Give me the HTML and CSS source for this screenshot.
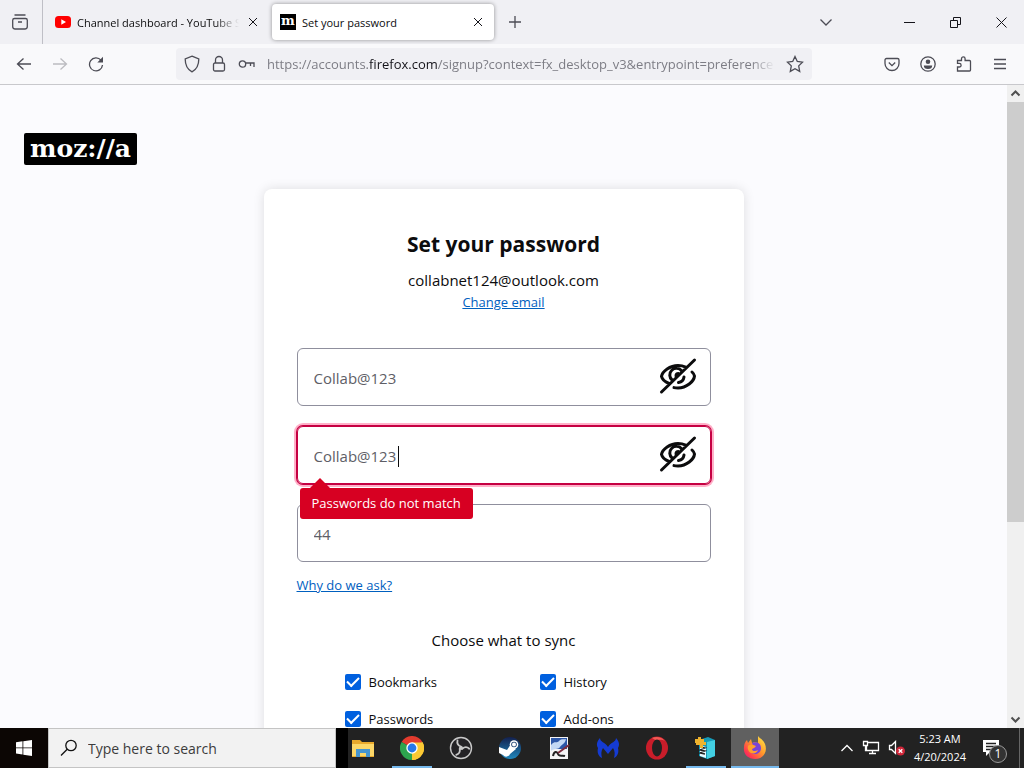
FILE: index.html
```
<!DOCTYPE html>
<html lang="en">
<head>
  <meta charset="UTF-8">
  <meta name="viewport" content="width=device-width, initial-scale=1">
  <title>Set your password</title>
  <link rel="stylesheet" href="styles.css">
</head>
<body>
  <!-- Tabs -->
  <div class="tab-bar">
    <button class="view" aria-label="Recent browsing">
      <svg width="18" height="18" viewBox="0 0 18 18"><path d="M3.500 2h11M3.500 5.500h11a1.800 1.800 0 0 1 1.800 1.800v6.200a2.500 2.500 0 0 1-2.500 2.500H4.200a2.500 2.500 0 0 1-2.500-2.500V7.300a1.800 1.800 0 0 1 1.800-1.800zM7 9h4"/></svg>
    </button>
    <div class="tabs">
      <div class="tab">
        <svg class="favicon" width="16" height="16" viewBox="0 0 16 16"><rect y="2" width="16" height="12" rx="3.500" fill="#f00"/><path d="M6.300 5.300v5.400L11 8z" fill="#fff"/></svg>
        <span class="tab-title fade">Channel dashboard - YouTube S</span>
        <button aria-label="Close tab"><svg width="10" height="10" viewBox="0 0 10 10"><path d="M1 1l8 8M9 1L1 9"/></svg></button>
      </div>
      <div class="tab active">
        <span class="favicon moz-icon">m</span>
        <span class="tab-title">Set your password</span>
        <button aria-label="Close tab"><svg width="10" height="10" viewBox="0 0 10 10"><path d="M1 1l8 8M9 1L1 9"/></svg></button>
      </div>
      <button class="new-tab" aria-label="New tab"><svg width="12" height="12" viewBox="0 0 12 12"><path d="M6 0v12M0 6h12"/></svg></button>
    </div>
    <button class="all-tabs" aria-label="List all tabs"><svg width="14" height="14" viewBox="0 0 14 14"><path d="M1.500 4.500L7 10l5.500-5.500"/></svg></button>
    <div class="window-buttons">
      <button aria-label="Minimize"><svg width="11" height="11" viewBox="0 0 11 11"><path d="M0 5.500h11"/></svg></button>
      <button aria-label="Restore"><svg width="11" height="11" viewBox="0 0 11 11"><path d="M.5 3.500h7v7h-7zM3.500 3.500v-3h7v7h-3"/></svg></button>
      <button aria-label="Close"><svg width="11" height="11" viewBox="0 0 11 11"><path d="M.5.5l10 10M10.500.5l-10 10"/></svg></button>
    </div>
  </div>

  <!-- Navigation -->
  <div class="nav-bar">
    <div class="nav-buttons">
      <button aria-label="Back"><svg width="16" height="16" viewBox="0 0 16 16"><path d="M15 8H1.500M7.500 2.500L1.500 8l6 5.500"/></svg></button>
      <button class="off" aria-label="Forward" disabled><svg width="16" height="16" viewBox="0 0 16 16"><path d="M1 8h13.500M8.500 2.500l6 5.500-6 5.500"/></svg></button>
      <button aria-label="Reload"><svg width="16" height="16" viewBox="0 0 16 16"><path d="M13 4.200A6.500 6.500 0 1 0 14.500 9"/><path d="M15 .8v5.700H9.300z" class="solid"/></svg></button>
    </div>
    <div class="url-bar">
      <svg width="16" height="18" viewBox="0 0 16 18"><path d="M8 1.200l6.800 2.800c0 6-2.300 10.500-6.800 12.800C3.500 14.500 1.200 10 1.200 4z"/></svg>
      <svg width="16" height="18" viewBox="0 0 16 18"><rect x="2.500" y="8" width="11" height="8" rx="1.500"/><path d="M4.500 8V5a3.500 3.500 0 0 1 7 0v3"/></svg>
      <svg width="18" height="18" viewBox="0 0 18 18"><circle cx="4.500" cy="9" r="3.200"/><path d="M7.700 8H16v4M12.500 8v3"/></svg>
      <p class="url fade">https://accounts.<b>firefox.com</b>/signup?context=fx_desktop_v3&amp;entrypoint=preference</p>
      <button aria-label="Bookmark this page"><svg width="18" height="18" viewBox="0 0 18 18"><path d="M9 1.500l2.300 5 5.200.7-3.800 3.700 1 5.500L9 13.700l-4.700 2.700 1-5.500L1.500 7.200l5.200-.7z"/></svg></button>
    </div>
    <div class="nav-buttons">
      <button aria-label="Pocket"><svg width="16" height="16" viewBox="0 0 16 16"><path d="M2.500 2.500h11a1.500 1.500 0 0 1 1.500 1.500v3.500a7 7 0 0 1-14 0V4a1.500 1.500 0 0 1 1.500-1.500zM4.800 6.500L8 9.600l3.200-3.100"/></svg></button>
      <button aria-label="Account"><svg width="16" height="16" viewBox="0 0 16 16"><circle cx="8" cy="8" r="7.200"/><circle cx="8" cy="5.700" r="2.300" class="solid"/><path d="M3.800 9.500h8.400a4.200 3.500 0 0 1-8.400 0z" class="solid"/></svg></button>
      <button aria-label="Extensions"><svg width="16" height="16" viewBox="0 0 16 16"><path d="M1.500 15v-4h1.800a1.800 1.800 0 0 0 0-3.600H1.500V4.500h4V2.700a1.800 1.800 0 0 1 3.600 0v1.800h4.400a1 1 0 0 1 1 1V14a1 1 0 0 1-1 1z"/></svg></button>
      <button aria-label="Menu"><svg width="14" height="14" viewBox="0 0 14 14"><path d="M1 2.500h12M1 7h12M1 11.500h12"/></svg></button>
    </div>
  </div>

  <!-- Page -->
  <div class="viewport">
    <div class="page">
      <header><a class="logo" href="#">moz://a</a></header>
      <main class="card">
        <h1>Set your password</h1>
        <p class="email">collabnet124@outlook.com</p>
        <a class="change" href="#">Change email</a>
        <form>
          <div class="field">
            <input type="text" aria-label="Password" value="Collab@123">
            <button type="button" aria-label="Hide password"><svg width="40" height="40" viewBox="0 0 40 40"><path d="M11 27.500C7 25.800 4 22.500 3.500 20.300 4.500 15 12 9.500 20 9.500c3 0 5.500.6 7.700 1.600M34 16c1.300 1.200 2.300 2.700 2.500 4C36 25.500 28.500 32 20 32c-1.500 0-2.800-.1-4-.4M14.300 24.300a6.700 6.700 0 1 1 9.500-9.300M26 21a6.500 6.500 0 0 1-5.500 5.500M18 20a2.500 2.500 0 0 1 2.500-2.500M3.500 36L36.500 4"/></svg></button>
          </div>
          <div class="field error">
            <input type="text" aria-label="Repeat password" value="Collab@123">
            <span class="caret"></span>
            <button type="button" aria-label="Hide password"><svg width="40" height="40" viewBox="0 0 40 40"><path d="M11 27.500C7 25.800 4 22.500 3.500 20.300 4.500 15 12 9.500 20 9.500c3 0 5.500.6 7.700 1.600M34 16c1.300 1.200 2.300 2.700 2.500 4C36 25.500 28.500 32 20 32c-1.500 0-2.800-.1-4-.4M14.300 24.300a6.700 6.700 0 1 1 9.500-9.300M26 21a6.500 6.500 0 0 1-5.500 5.500M18 20a2.500 2.500 0 0 1 2.500-2.500M3.500 36L36.500 4"/></svg></button>
            <span class="tooltip">Passwords do not match</span>
          </div>
          <div class="field">
            <input type="text" aria-label="How old are you?" value="44">
          </div>
          <a class="why" href="#">Why do we ask?</a>
          <h2>Choose what to sync</h2>
          <div class="sync">
            <label><input type="checkbox" checked>Bookmarks</label>
            <label><input type="checkbox" checked>History</label>
            <label><input type="checkbox" checked>Passwords</label>
            <label><input type="checkbox" checked>Add-ons</label>
          </div>
        </form>
      </main>
    </div>
    <div class="scrollbar">
      <svg width="17" height="17" viewBox="0 0 17 17"><path d="M4.500 10.500l4-4 4 4"/></svg>
      <div class="track"><div class="thumb"></div></div>
      <svg width="17" height="17" viewBox="0 0 17 17"><path d="M4.500 6.500l4 4 4-4"/></svg>
    </div>
  </div>

  <!-- Taskbar -->
  <footer class="taskbar">
    <button class="start" aria-label="Start"><svg width="16" height="16" viewBox="0 0 16 16"><path d="M0 2.200L6.500 1.300v6.200H0zM7.300 1.200L16 0v7.500H7.300zM0 8.300h6.500v6.200L0 13.600zM7.300 8.300H16V16l-8.700-1.200z" fill="#fff" stroke="none"/></svg></button>
    <label class="search">
      <svg width="18" height="18" viewBox="0 0 18 18"><circle cx="11" cy="6.500" r="5.200"/><path d="M7.200 10.300L1 16.500"/></svg>
      <input type="text" placeholder="Type here to search" aria-label="Search">
    </label>
    <div class="apps">
      <button aria-label="File Explorer"><svg width="24" height="24" viewBox="0 0 24 24"><path d="M1 4h8l2 2h12v15H1z" fill="#e8a92c"/><path d="M1 8h22v12H1z" fill="#fcd768"/><path d="M5 13h14v8h-4v-4H9v4H5z" fill="#4695cf"/></svg></button>
      <button class="open" aria-label="Chrome"><svg width="24" height="24" viewBox="0 0 24 24"><path d="M12 12L1.600 6A12 12 0 0 1 22.400 6z" fill="#e33b2e"/><path d="M12 12l10.400-6A12 12 0 0 1 12 24z" fill="#fcc934"/><path d="M12 12v12A12 12 0 0 1 1.600 6z" fill="#2da44e"/><path d="M12 6.500h10.700A12 12 0 0 1 12 24l4.800-9z" fill="#fcc934"/><circle cx="12" cy="12" r="5.700" fill="#fff"/><circle cx="12" cy="12" r="4.400" fill="#2878e8"/></svg></button>
      <button aria-label="OBS"><svg width="24" height="24" viewBox="0 0 24 24"><circle cx="12" cy="12" r="10.500" fill="#242326" stroke="#c9c9c9" stroke-width="1.400"/><g fill="none" stroke="#c9c9c9" stroke-width="1.800" stroke-linecap="round"><path id="blade" d="M8.500 4.500C7.800 7.500 9 9.500 12 10.500"/><use href="#blade" transform="rotate(120 12 12)"/><use href="#blade" transform="rotate(240 12 12)"/></g><circle cx="12" cy="12" r="2" fill="#c9c9c9"/></svg></button>
      <button aria-label="Steam"><svg width="24" height="24" viewBox="0 0 24 24"><defs><linearGradient id="steam" x2="0" y2="1"><stop stop-color="#14204e"/><stop offset="1" stop-color="#1f87bd"/></linearGradient></defs><circle cx="12" cy="12" r="11" fill="url(#steam)"/><path d="M1 11l8 3 4-6 5 5-6 5a4 4 0 0 1-7 1l-4-2z" fill="#fff"/><circle cx="16" cy="8.500" r="4.300" fill="#fff"/><circle cx="16" cy="8.500" r="2.800" fill="#234574"/><circle cx="16" cy="8.500" r="2" fill="#fff"/></svg></button>
      <button aria-label="Paint tool"><svg width="24" height="24" viewBox="0 0 24 24"><path d="M3 1h18v22H3z" fill="#f4f4f6"/><path d="M4 2h16v11H4z" fill="#2d57a8"/><path d="M4 9c4-5 5-1 8-4s5-1 7-2c-1 5-4 5-6 8s-6 1-9 4z" fill="#c3d8f5"/><path d="M6 20c1-5 4-5 5-2s4 1 7 2" fill="none" stroke="#222" stroke-width="2"/><path d="M11 17l11-8" stroke="#7d2c3e" stroke-width="2"/></svg></button>
      <button aria-label="Malwarebytes"><svg width="24" height="24" viewBox="0 0 24 24"><path d="M4 2c0 4 5 4 8 9 3-5 8-5 8-9 3 3 4 7 2 10 1 4 0 8-4 10 1-4 1-7-1-10l-5 6-5-6c-2 3-2 6-1 10-4-2-5-6-4-10C0 9 1 5 4 2z" fill="#153bd2"/></svg></button>
      <button aria-label="Opera"><svg width="24" height="24" viewBox="0 0 24 24"><ellipse cx="12" cy="12" rx="11" ry="11.500" fill="#c91d2a"/><path d="M7 2a11 11 0 0 1 13 3c-2-1-6-2-8 0z" fill="#f15a55"/><ellipse cx="12" cy="12" rx="5" ry="8.500" fill="#222"/></svg></button>
      <button class="open" aria-label="Archive"><svg width="24" height="24" viewBox="0 0 24 24"><path d="M5 4l9-3 7 3v16l-8 3-8-3z" fill="#169bb8"/><path d="M13 6l8-2v16l-8 3z" fill="#43d0e3"/><path d="M6 9l6 2v11l-6-2z" fill="#e8faff"/><path d="M6 11l5 1-5 2 5 1-5 2 5 1" fill="none" stroke="#222"/><path d="M1 3h3V1h3v2h3v3h2v3H9v3H6V9H2V7H1z" fill="#eeb32e"/></svg></button>
      <button class="open current" aria-label="Firefox"><svg width="24" height="24" viewBox="0 0 24 24"><defs><linearGradient id="fox" x1="1" x2="0" y2="1"><stop stop-color="#fff04a"/><stop offset=".45" stop-color="#ff982b"/><stop offset=".8" stop-color="#ff3552"/><stop offset="1" stop-color="#e31587"/></linearGradient></defs><path d="M15 0c1 2 5 3 7 8 3 8-2 15-10 15C5 23 0 18 1 11c0-3 1-5 3-7l1 3 3-4 1 4c2-1 4-1 6 0z" fill="url(#fox)"/><path d="M9 7c4-2 9 0 9 5 0 4-3 6-6 6s-5-2-5-5l4-1z" fill="#7944d8"/><path d="M5 10c2-2 5-1 8 0-1 2-3 2-4 3 0 2 3 3 6 1-1 3-4 4-7 3-2-1-4-4-3-7z" fill="#ffa02d"/></svg></button>
    </div>
    <div class="tray">
      <svg width="14" height="14" viewBox="0 0 14 14"><path d="M1.500 10L7 4.500l5.500 5.500"/></svg>
      <svg width="18" height="16" viewBox="0 0 18 16"><path d="M6 2.500h10.500v8H4.500V6M10.500 10.500v3M7 13.500h7M1.500 1.500h4v4h-4zM3.500 5.500v5h2"/></svg>
      <svg width="18" height="16" viewBox="0 0 18 16"><path d="M1.500 5.500h2l4-4v12l-4-4h-2z"/><circle cx="12.500" cy="11" r="4.500" fill="#cf2639" stroke="none"/><path d="M10.700 9.200l3.600 3.600M14.300 9.200l-3.600 3.600"/></svg>
      <p class="clock">5:23 AM<br>4/20/2024</p>
      <button aria-label="1 new notification"><svg width="18" height="18" viewBox="0 0 18 18"><path d="M1 1h16v12H8l-4 4v-4H1z" fill="#fff" stroke="none"/><path d="M4 4.500h10M4 7.500h10M4 10.500h6" stroke="#222"/></svg><span class="badge">1</span></button>
    </div>
  </footer>
</body>
</html>
```
FILE: styles.css
```
* {
  box-sizing: border-box;
}
body {
  margin: 0;
  height: 100vh;
  display: flex;
  flex-direction: column;
  overflow: hidden;
  font-family: "Open Sans", "Noto Sans", sans-serif;
  font-size: 13px;
  color: #0c0c0d;
}
p, h1, h2 {
  margin: 0;
}
button {
  display: flex;
  align-items: center;
  justify-content: center;
  flex-shrink: 0;
  padding: 0;
  border: none;
  background: none;
  font-family: inherit;
  color: inherit;
}
svg {
  flex-shrink: 0;
  fill: none;
  stroke: #4c4c55;
  stroke-width: 1.3;
}
.solid {
  fill: #4c4c55;
  stroke: none;
}
.fade {
  mask-image: linear-gradient(to left, transparent, #000 24px);
}

/* Tabs */
.tab-bar {
  display: flex;
  height: 44px;
  flex-shrink: 0;
  background: #f0f0f4;
}
.view {
  width: 43px;
  padding-right: 2px;
  border-right: 1px solid #bfbfc6;
}
.tabs {
  flex: 1;
  display: flex;
  align-items: center;
  gap: 3px;
  padding-left: 4px;
}
.tab {
  display: flex;
  align-items: center;
  gap: 6px;
  width: 222px;
  height: 36px;
  padding: 0 8px;
  border-radius: 4px;
  font-size: 11px;
}
.tab.active {
  background: #fff;
  box-shadow: 0 0 4px rgba(0, 0, 0, 0.4);
}
.tab button {
  width: 16px;
  height: 20px;
}
.tab svg:not(.favicon), .window-buttons svg {
  stroke: #15141a;
  stroke-width: 1;
}
.tab .favicon {
  flex-shrink: 0;
  stroke: none;
}
.moz-icon {
  width: 16px;
  height: 16px;
  background: #000;
  color: #fff;
  font: bold 13px/13px "DejaVu Serif", serif;
  text-align: center;
}
.tab-title {
  flex: 1;
  overflow: hidden;
  white-space: nowrap;
}
.new-tab {
  width: 36px;
  height: 36px;
}
.all-tabs {
  width: 40px;
  margin-right: 40px;
}
.window-buttons {
  display: flex;
}
.window-buttons button {
  width: 46px;
}

/* Navigation */
.nav-bar {
  display: flex;
  align-items: center;
  gap: 62px;
  height: 41px;
  flex-shrink: 0;
  padding: 0 6px;
  background: #f9f9fb;
  border-bottom: 1px solid #c8c8cc;
}
.nav-buttons {
  display: flex;
}
.nav-buttons button {
  width: 36px;
  height: 32px;
}
.off {
  opacity: 0.35;
}
.url-bar {
  flex: 1;
  min-width: 0;
  display: flex;
  align-items: center;
  gap: 11px;
  height: 32px;
  padding: 0 8px;
  border-radius: 4px;
  background: #f0f0f4;
}
.url {
  flex: 1;
  overflow: hidden;
  white-space: nowrap;
  color: #7d7d85;
}
.url b {
  font-weight: normal;
  color: #15141a;
}

/* Page */
.viewport {
  flex: 1;
  min-height: 0;
  display: flex;
  background: #fbfbfe;
}
.page {
  flex: 1;
  overflow: hidden;
}
header {
  display: flex;
  padding: 48px 24px 24px;
}
.logo {
  padding: 0 6px;
  border-radius: 2px;
  background: #000;
  color: #fff;
  font: bold 25px/32px "DejaVu Serif", serif;
  text-decoration: none;
}
.card {
  display: flex;
  flex-direction: column;
  align-items: center;
  max-width: 480px;
  margin: 0 auto;
  padding: 40px 33px;
  border-radius: 8px;
  background: #fff;
  box-shadow: 0 0 12px rgba(0, 0, 0, 0.12);
}
h1 {
  font-size: 21px;
  line-height: 30px;
}
.email {
  margin-top: 9px;
  font-size: 15px;
  line-height: 24px;
}
.change, .why {
  color: #0060bf;
  line-height: 20px;
}
form {
  display: flex;
  flex-direction: column;
  gap: 20px;
  width: 100%;
  margin-top: 36px;
}
.field {
  position: relative;
  display: flex;
  height: 58px;
  padding-right: 12px;
  border: 1px solid #8f8f9d;
  border-radius: 6px;
}
.field input {
  flex: 1;
  min-width: 0;
  padding: 2px 16px 0;
  border: none;
  outline: none;
  background: none;
  font: 15px "Open Sans", sans-serif;
  color: #5e5e66;
}
.field button {
  padding-bottom: 2px;
}
.field svg {
  stroke: #0c0c0d;
  stroke-width: 3;
  stroke-linecap: round;
}
.field.error {
  border-color: #c50042;
  box-shadow: 0 0 0 1px #c50042, 0 0 0 3px #ffb0c8;
}
.caret {
  position: absolute;
  left: 100px;
  top: 19px;
  width: 1px;
  height: 21px;
  background: #0c0c0d;
}
.tooltip {
  position: absolute;
  z-index: 1;
  left: 2px;
  top: 61px;
  padding: 0 12px;
  border-radius: 3px;
  background: #d70022;
  color: #fff;
  line-height: 31px;
}
.tooltip::before {
  content: "";
  position: absolute;
  left: 10px;
  bottom: 100%;
  border: 10px solid transparent;
  border-top: none;
  border-bottom-color: #d70022;
}
.why {
  align-self: flex-start;
  margin-top: -7px;
}
h2 {
  margin-top: 13px;
  font-size: 15px;
  font-weight: normal;
  line-height: 24px;
  text-align: center;
}
.sync {
  display: grid;
  grid-template-columns: 1fr 1fr;
  gap: 17px 24px;
  padding-left: 48px;
}
.sync label {
  display: flex;
  align-items: center;
  gap: 8px;
  line-height: 20px;
}
.sync input {
  appearance: none;
  display: grid;
  place-items: center;
  width: 16px;
  height: 16px;
  margin: 0;
  border-radius: 2px;
  background: #0060df;
}
.sync input::before {
  content: "";
  width: 10px;
  height: 5px;
  margin-top: -3px;
  border: solid #fff;
  border-width: 0 0 2px 2px;
  transform: rotate(-45deg);
}
.scrollbar {
  display: flex;
  flex-direction: column;
  width: 17px;
  background: #f0f0f0;
}
.scrollbar svg {
  stroke: #505050;
  stroke-width: 2;
}
.track {
  flex: 1;
}
.thumb {
  height: 69%;
  background: #cdcdcd;
}

/* Taskbar */
.taskbar {
  display: flex;
  height: 40px;
  flex-shrink: 0;
  background: #222;
  color: #fff;
}
.start {
  width: 48px;
  background: #0c0604;
}
.search {
  display: flex;
  align-items: center;
  gap: 10px;
  width: 288px;
  padding: 0 11px;
  border: 1px solid #c4c4c4;
  background: #f2f2f2;
}
.search svg {
  stroke: #111;
}
.search input {
  flex: 1;
  min-width: 0;
  padding: 0;
  border: none;
  outline: none;
  background: none;
  font: 14px "Open Sans", sans-serif;
}
.search input::placeholder {
  color: #3c3c3c;
}
.apps {
  display: flex;
  gap: 1px;
  padding-left: 3px;
  background: linear-gradient(#000, #000) left / 12px 100% no-repeat;
}
.apps button {
  width: 48px;
}
.apps svg {
  stroke: none;
}
.apps .open {
  background: linear-gradient(#76b9ed, #76b9ed) bottom / 40px 2px no-repeat;
}
.apps .current {
  background: linear-gradient(#76b9ed, #76b9ed) bottom / 100% 2px no-repeat #606060;
}
.tray {
  display: flex;
  align-items: center;
  gap: 8px;
  margin-left: auto;
  margin-right: 4px;
  padding-right: 19px;
  border-right: 1px solid #666;
}
.tray svg {
  stroke: #fff;
}
.clock {
  font-size: 11px;
  line-height: 18px;
  text-align: center;
}
.tray button {
  position: relative;
  margin-left: 8px;
}
.badge {
  position: absolute;
  left: 7px;
  top: 6px;
  width: 18px;
  height: 18px;
  border: 1px solid #999;
  border-radius: 50%;
  background: #333;
  font-size: 12px;
  line-height: 16px;
}
```
